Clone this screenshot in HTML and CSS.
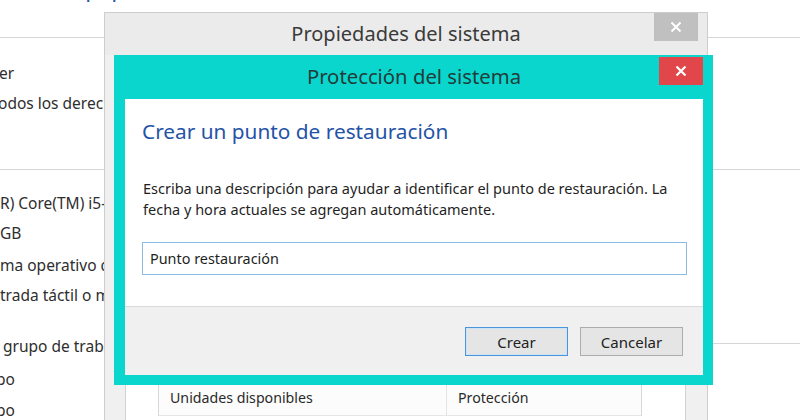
FILE: index.html
```html
<!DOCTYPE html>
<html lang="es">
<head>
<meta charset="utf-8">
<title>Protección del sistema</title>
<link rel="stylesheet" href="styles.css">
</head>
<body>
<div class="screen">
  <div class="desk">
    <div class="desk-head"><span class="desk-title">Nombre del equipo</span></div>
    <div class="desk-sec sec-a">
      <div class="desk-line">er</div>
      <div class="desk-line">odos los derechos reservados.</div>
    </div>
    <div class="sec-b">
      <div class="desk-line">R) Core(TM) i5-3317U CPU</div>
      <div class="desk-line">GB</div>
      <div class="desk-line">ma operativo de 64 bits</div>
      <div class="desk-line">trada táctil o manuscrita</div>
    </div>
    <div class="desk-row">
      <span class="desk-text indent">grupo de trabajo</span>
      <span class="rule-right"></span>
    </div>
    <div class="desk-line l-po1">po</div>
    <div class="desk-line l-po2">po</div>
  </div>

  <div class="win outer">
    <div class="titlebar outer-bar">
      <span></span>
      <span class="win-title">Propiedades del sistema</span>
      <span class="close close-gray"><svg width="12" height="12" viewBox="0 0 12 12"><path d="M1.5 1.5 L10.5 10.5 M10.5 1.5 L1.5 10.5" stroke="#fff" stroke-width="2" fill="none"/></svg></span>
    </div>
    <div class="outer-body">
      <div class="tabpage">
        <div class="listbox">
          <div class="lb-head">
            <span class="lb-col c1">Unidades disponibles</span>
            <span class="lb-col c2">Protección</span>
          </div>
        </div>
      </div>
    </div>
  </div>

  <div class="win inner">
    <div class="titlebar inner-bar">
      <span></span>
      <span class="win-title dark">Protección del sistema</span>
      <span class="close close-red"><svg width="12" height="12" viewBox="0 0 12 12"><path d="M1.5 1.5 L10.5 10.5 M10.5 1.5 L1.5 10.5" stroke="#fff" stroke-width="2.2" fill="none"/></svg></span>
    </div>
    <div class="content">
      <h1 class="heading">Crear un punto de restauración</h1>
      <p class="desc">Escriba una descripción para ayudar a identificar el punto de restauración. La fecha y hora actuales se agregan automáticamente.</p>
      <div class="field">Punto restauración</div>
    </div>
    <div class="footer">
      <button class="btn btn-default">Crear</button>
      <button class="btn">Cancelar</button>
    </div>
  </div>
</div>
</body>
</html>
```

FILE: styles.css
```css
* { box-sizing: border-box; }
html, body { margin: 0; padding: 0; background: #fff; }
body { font-family: "Noto Sans", "Open Sans", sans-serif; color: #2b2b2b; }

.screen {
  position: relative;
  width: 800px;
  height: 420px;
  overflow: hidden;
  background: #fff;
}

/* background window content */
.desk { width: 800px; }
.desk-head {
  height: 38px;
  border-bottom: 1px solid #d6d6d6;
  overflow: hidden;
}
.desk-title {
  display: block;
  margin-top: -28px;
  margin-left: -70px;
  font-size: 23px;
  line-height: 30px;
  color: #2a5caa;
  white-space: nowrap;
}
.desk-line, .desk-text {
  font-size: 15.5px;
  line-height: 30px;
  white-space: nowrap;
  color: #2e2e2e;
}
.desk-sec { border-bottom: 1px solid #d6d6d6; }
.sec-a { height: 132px; padding-top: 20px; }
.sec-a .desk-line:first-child { margin-left: -1px; }
.sec-a .desk-line:last-child { margin-left: -2px; }
.sec-b { padding-top: 18px; height: 158px; }
.sec-b .desk-line:nth-child(3) { margin-top: 2px; }
.desk-row {
  display: flex;
  align-items: center;
  height: 35px;
}
.indent { padding-left: 3px; }
.rule-right {
  margin-left: auto;
  width: 90px;
  border-top: 1px solid #d6d6d6;
  align-self: flex-start;
  margin-top: 15px;
}
.l-po1 { margin-top: 1px; margin-left: -4px; }
.l-po2 { margin-top: 1px; margin-left: -4px; }

/* windows */
.win { position: absolute; }
.outer {
  left: 104px;
  top: 12px;
  width: 604px;
  height: 430px;
  background: #f0f0f0;
  border: 1px solid #cdcdcd;
}
.titlebar {
  display: grid;
  grid-template-columns: 1fr auto 1fr;
  align-items: start;
}
.outer-bar {
  height: 42px;
  background: #ebebeb;
}
.win-title {
  font-size: 20px;
  line-height: 42px;
  color: #3a3a3a;
  white-space: nowrap;
}
.close {
  justify-self: end;
  width: 44px;
  height: 28px;
  display: flex;
  align-items: center;
  justify-content: center;
}
.close-gray { background: #c0c0c0; margin-right: 9px; }
.close-red { background: #e1474a; margin-top: 2px; }

.outer-body { padding: 0 0 0 20px; }
.tabpage {
  width: 561px;
  height: 400px;
  background: #fff;
  border: 1px solid #d3d3d3;
  padding: 323px 0 0 32px;
}
.listbox {
  width: 484px;
  border: 1px solid #d8d8d8;
  border-bottom: none;
  background: #fff;
}
.lb-head {
  display: flex;
  height: 36px;
  border-bottom: 1px solid #e6e6e6;
}
.lb-col {
  font-size: 14.2px;
  line-height: 36px;
  color: #2a2a2a;
  padding-left: 11px;
  background: #fcfcfc;
}
.c1 { width: 288px; border-right: 1px solid #e3e3e3; }
.c2 { flex: 1; }

/* inner dialog */
.inner {
  left: 114px;
  top: 55px;
  width: 599px;
  height: 330px;
  background: #0ad6cd;
  padding: 0 10px 10px 11px;
  display: flex;
  flex-direction: column;
}
.inner-bar { height: 44px; }
.win-title.dark { color: #213d3b; line-height: 42px; font-size: 20.3px; }

.content {
  background: #fff;
  height: 207px;
  padding: 18px 18px 0 17px;
}
.heading {
  margin: 0;
  font-size: 20.8px;
  font-weight: normal;
  line-height: 28px;
  color: #2553a6;
}
.desc {
  margin: 33px 0 0 1px;
  font-size: 14.5px;
  line-height: 21px;
  color: #1f1f1f;
  width: 540px;
}
.field {
  margin-top: 22px;
  width: 545px;
  height: 33px;
  border: 1px solid #8cbbe6;
  font-size: 14.4px;
  line-height: 31px;
  padding-left: 7px;
  color: #1f1f1f;
}
.footer {
  flex: 1;
  background: #f0f0f0;
  border-top: 1px solid #dadada;
  display: flex;
  justify-content: flex-end;
  align-items: flex-start;
  gap: 12px;
  padding: 20px 20px 0 0;
}
.btn {
  width: 103px;
  height: 29px;
  font-family: "Noto Sans", "Open Sans", sans-serif;
  font-size: 15px;
  color: #222;
  background: #e5e5e5;
  border: 1px solid #adadad;
  padding: 0;
}
.btn-default {
  border-color: #4a95dc;
  box-shadow: inset 0 0 0 1px #cfe3f6;
}
```
